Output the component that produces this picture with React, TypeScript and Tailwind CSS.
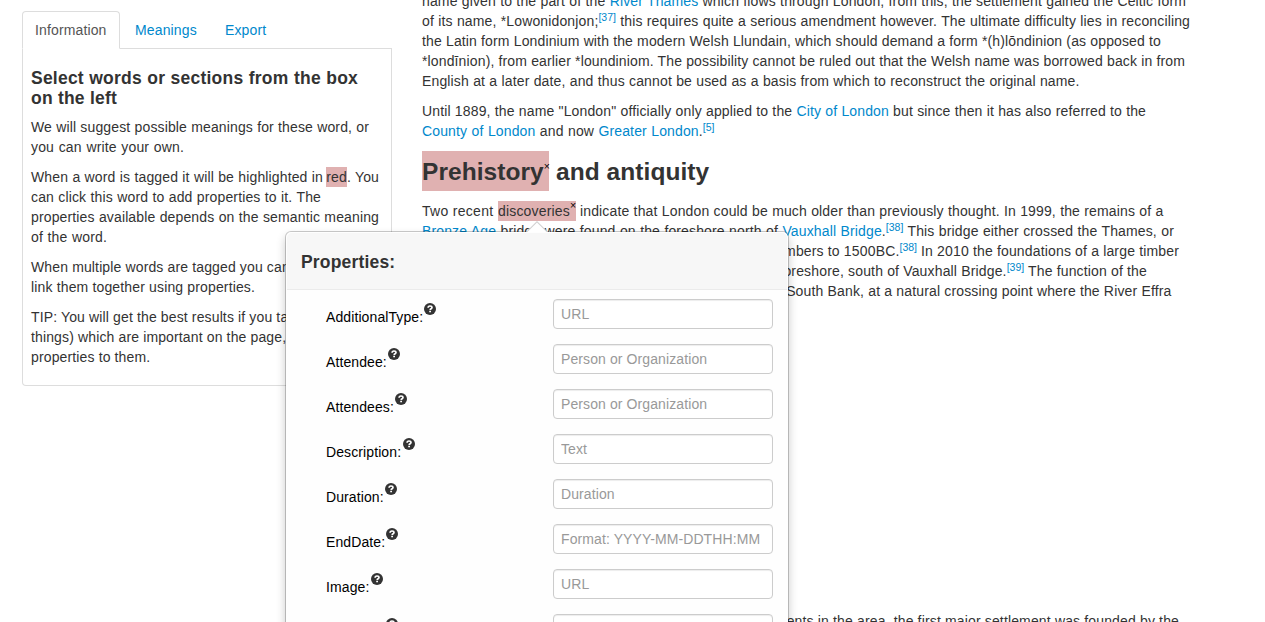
import type { ReactNode } from "react";

function Line({ w, children }: { w: string; children: ReactNode }) {
  return <span className={`block [text-align-last:justify] ${w}`}>{children}</span>;
}

function A({ children }: { children: ReactNode }) {
  return <a className="text-[#0088cc]">{children}</a>;
}

function Ref({ children }: { children: ReactNode }) {
  return <sup className="relative -top-[0.5em] align-baseline text-[10.5px] leading-[0] tracking-normal text-[#0088cc]">{children}</sup>;
}

function HelpIcon() {
  return (
    <svg viewBox="0 0 12 12" className="ml-[1px] size-3 shrink-0">
      <circle cx="6" cy="6" r="6" fill="#333" />
      <path d="M4.1 4.8C4.1 3.5 4.9 3 6 3s2 .6 2 1.6c0 1.2-1.8 1.1-1.8 2.3" fill="none" stroke="#fff" strokeWidth="1.7" />
      <path d="M5.2 7.7h1.8v1.6H5.2z" fill="#fff" />
    </svg>
  );
}

const fields = [
  { label: "AdditionalType:", w: "w-[97px]", hint: "URL" },
  { label: "Attendee:", w: "w-[61px]", hint: "Person or Organization" },
  { label: "Attendees:", w: "w-[68px]", hint: "Person or Organization" },
  { label: "Description:", w: "w-[76px]", hint: "Text" },
  { label: "Duration:", w: "w-[58px]", hint: "Duration" },
  { label: "EndDate:", w: "w-[59px]", hint: "Format: YYYY-MM-DDTHH:MM" },
  { label: "Image:", w: "w-[44px]", hint: "URL" },
  { label: "Location:", w: "w-[59px]", hint: "Place" },
];

function Popover() {
  return (
    <div className="absolute left-[285px] top-[231px] h-[420px] w-[504px] rounded-md border border-black/20 bg-[#fefefe] bg-clip-padding p-px shadow-[0_5px_10px_rgba(0,0,0,0.2)]">
      <svg viewBox="0 0 22 11" className="absolute left-[240px] -top-[11px] h-[11px] w-[22px]">
        <path d="M0 11 11 0l11 11z" fill="#d0d0d0" />
        <path d="M1.4 11 11 1.4l9.6 9.6z" fill="#fff" />
      </svg>
      <h3 className="h-[57px] rounded-t-[5px] border-b border-[#ebebeb] bg-[#f7f7f7] pl-[14px] pt-[9px] text-[17.5px] font-bold leading-10 tracking-[0.18px] text-[#333]">
        Properties:
      </h3>
      <div className="flex flex-col gap-[15px] pl-[39px] pt-[9px]">
        {fields.map((f) => (
          <div key={f.label} className="flex h-[30px] items-start">
            <div className="flex w-[227px] pt-1">
              <span className={`shrink-0 whitespace-nowrap pt-[4px] tracking-[0.1px] text-black ${f.w}`}>{f.label}</span>
              <HelpIcon />
            </div>
            <input
              placeholder={f.hint}
              className="h-[30px] w-[220px] rounded border border-[#ccc] bg-white px-[7px] py-1 text-sm leading-5 tracking-[0.1px] shadow-[inset_0_1px_1px_rgba(0,0,0,0.075)] outline-none placeholder:text-[#999]"
            />
          </div>
        ))}
      </div>
    </div>
  );
}

function Sidebar() {
  return (
    <aside className="w-[370px] shrink-0 pt-[11px]">
      <nav className="flex h-[38px] border-b border-[#ddd]">
        <a className="h-[38px] w-[98px] rounded-t border border-b-white border-[#ddd] bg-white pl-3 pt-2 text-[#555]">Information</a>
        <a className="w-[90px] pl-[15px] pt-[9px] text-[#0088cc]">Meanings</a>
        <a className="pl-[15px] pt-[9px] text-[#0088cc]">Export</a>
      </nav>
      <div className="flex h-[337px] flex-col gap-[10px] rounded-b border border-t-0 border-[#ddd] pl-2 pt-[19px]">
        <h4 className="-mb-px whitespace-nowrap text-[17.5px] font-bold leading-5 tracking-[0.22px]">
          <Line w="w-[327px]">Select words or sections from the box</Line>
          on the left
        </h4>
        <p>
          <Line w="w-[338px]">We will suggest possible meanings for these word, or</Line>
          <Line w="w-[153px]">you can write your own.</Line>
        </p>
        <p>
          <Line w="w-[348px]">When a word is tagged it will be highlighted in <span className="-ml-px bg-[#e0b1b1] py-[2px]">red</span>. You</Line>
          <Line w="w-[290px]">can click this word to add properties to it. The</Line>
          <Line w="w-[348px]">properties available depends on the semantic meaning</Line>
          <Line w="w-[76px]">of the word.</Line>
        </p>
        <p className="whitespace-nowrap">
          When multiple words are tagged you can
          <Line w="w-[224px]">link them together using properties.</Line>
        </p>
        <p className="whitespace-nowrap">
          TIP: You will get the best results if you tag nouns
          <br />
          things) which are important on the page, and
          <br />
          properties to them.
        </p>
      </div>
    </aside>
  );
}

function Article() {
  return (
    <main className="-mt-[9px] flex flex-col gap-[10px] whitespace-nowrap">
      <p>
        <Line w="w-[764px]">name given to the part of the <A>River Thames</A> which flows through London; from this, the settlement gained the Celtic form</Line>
        <Line w="w-[768px]">of its name, *Lowonidonjon;<Ref>[37]</Ref> this requires quite a serious amendment however. The ultimate difficulty lies in reconciling</Line>
        <Line w="w-[739px]">the Latin form Londinium with the modern Welsh Llundain, which should demand a form *(h)lōndinion (as opposed to</Line>
        <Line w="w-[763px]">*londīnion), from earlier *loundiniom. The possibility cannot be ruled out that the Welsh name was borrowed back in from</Line>
        <Line w="w-[657.5px]">English at a later date, and thus cannot be used as a basis from which to reconstruct the original name.</Line>
      </p>
      <p>
        <Line w="w-[724px]">Until 1889, the name "London" officially only applied to the <A>City of London</A> but since then it has also referred to the</Line>
        <Line w="w-[292.5px]"><A>County of London</A> and now <A>Greater London</A>.<Ref>[5]</Ref></Line>
      </p>
      <h3 className="flex h-10 text-[24.5px] font-bold leading-[42px] tracking-[0.06px]">
        <span className="flex w-[127px] justify-between bg-[#e0b1b1]">
          Prehistory<span className="-mt-[6px] text-[10.5px] font-normal tracking-normal text-black">×</span>
        </span>
        <span className="pl-[7px]">and antiquity</span>
      </h3>
      <div>
        <div className="flex h-5">
          <span className="w-[72px] tracking-[0.3px]">Two recent</span>
          <span className="ml-1 flex w-[78px] justify-between bg-[#e0b1b1] tracking-[0.18px]">
            discoveries<span className="-mt-[6px] text-[10.5px] tracking-normal text-black">×</span>
          </span>
          <span className="ml-[4px]">
            <Line w="w-[583.5px]">indicate that London could be much older than previously thought. In 1999, the remains of a</Line>
          </span>
        </div>
        <Line w="w-[752px]"><A>Bronze Age</A> bridge were found on the foreshore north of <A>Vauxhall Bridge</A>.<Ref>[38]</Ref> This bridge either crossed the Thames, or</Line>
        <div className="w-[757px] text-right tracking-[0.16px]">timbers to 1500BC.<Ref>[38]</Ref> In 2010 the foundations of a large timber</div>
        <div className="w-[725px] text-right tracking-[0.16px]">foreshore, south of Vauxhall Bridge.<Ref>[39]</Ref> The function of the</div>
        <div className="w-[749.5px] text-right tracking-[0.16px]">South Bank, at a natural crossing point where the River Effra</div>
      </div>
      <p className="mt-[300px] w-[757px] text-right tracking-[0.15px]">settlements in the area, the first major settlement was founded by the</p>
    </main>
  );
}

export default function App() {
  return (
    <div className="relative flex h-[622px] w-[1265px] gap-[30px] overflow-hidden bg-white pl-[22px] font-['Liberation_Sans',Arial,sans-serif] text-sm leading-5 tracking-[0.135px] text-[#333]">
      <Sidebar />
      <Article />
      <Popover />
    </div>
  );
}
